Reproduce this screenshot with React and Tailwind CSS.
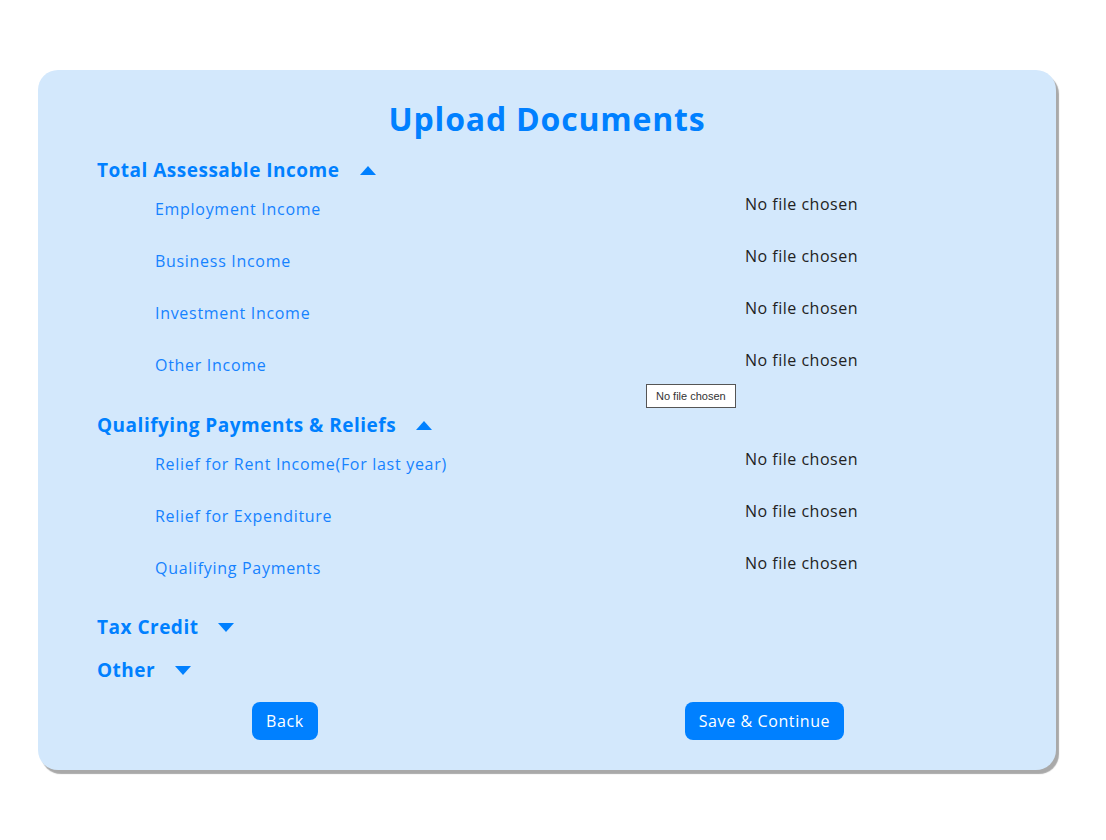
import { useState } from 'react';

const SECTIONS = [
  {
    title: 'Total Assessable Income',
    items: ['Employment Income', 'Business Income', 'Investment Income', 'Other Income'],
    open: true,
    mt: 'mt-[13px]',
  },
  {
    title: 'Qualifying Payments & Reliefs',
    items: ['Relief for Rent Income(For last year)', 'Relief for Expenditure', 'Qualifying Payments'],
    open: true,
    mt: 'mt-[19px]',
  },
  { title: 'Tax Credit', items: [], open: false, mt: 'mt-[18px]' },
  { title: 'Other', items: [], open: false, mt: 'mt-[15px]' },
];

function Caret({ up }) {
  return (
    <svg width="16" height="9" viewBox="0 0 16 9" className="ml-[20px]">
      {up ? <path d="M0 9 L8 0 L16 9 Z" fill="#0080ff" /> : <path d="M0 0 L16 0 L8 9 Z" fill="#0080ff" />}
    </svg>
  );
}

function Section({ section }) {
  const [open, setOpen] = useState(section.open);
  return (
    <div className={section.mt}>
      <button type="button" onClick={() => setOpen(!open)} className="flex items-center h-[28px] text-[19px] font-bold tracking-[0.5px] text-[#0080ff]">
        {section.title}
        <Caret up={open} />
      </button>
      {open && section.items.map((item) => (
        <div key={item} className="grid grid-cols-[590px_1fr] h-[52px] items-center pl-[58px]">
          <span className="text-[16px] tracking-[0.7px] text-[#1682ff] mb-[2px]">{item}</span>
          <span className="text-[16px] tracking-[0.5px] text-[#222] mb-[12px]">No file chosen</span>
        </div>
      ))}
    </div>
  );
}

export default function App() {
  return (
    <div className="min-h-[840px] bg-white pt-[70px] px-[38px] font-['Open_Sans',sans-serif]">
      <div className="relative w-[1018px] rounded-[20px] bg-[#d3e8fc] shadow-[3px_4px_1px_#a9a9a9] pt-[25px] pb-[30px] pl-[59px]">
        <h1 className="text-center text-[32px] leading-[48px] font-bold tracking-[0.8px] text-[#0080ff] -ml-[59px]">Upload Documents</h1>

        {SECTIONS.map((s) => <Section key={s.title} section={s} />)}

        <div className="flex gap-[367px] pl-[155px] mt-[18px]">
          <button type="button" className="h-[38px] px-[14px] rounded-[8px] bg-[#0080ff] text-white text-[16px] tracking-[0.6px]">Back</button>
          <button type="button" className="h-[38px] px-[14px] rounded-[8px] bg-[#0080ff] text-white text-[16px] tracking-[0.6px]">Save &amp; Continue</button>
        </div>

        {/* native tooltip of the hovered file input */}
        <div className="absolute left-[608px] top-[314px] border border-[#555] bg-white px-[9px] py-[3px] text-[11px] leading-[16px] text-[#333] font-['Liberation_Sans',sans-serif]">
          No file chosen
        </div>
      </div>
    </div>
  );
}
